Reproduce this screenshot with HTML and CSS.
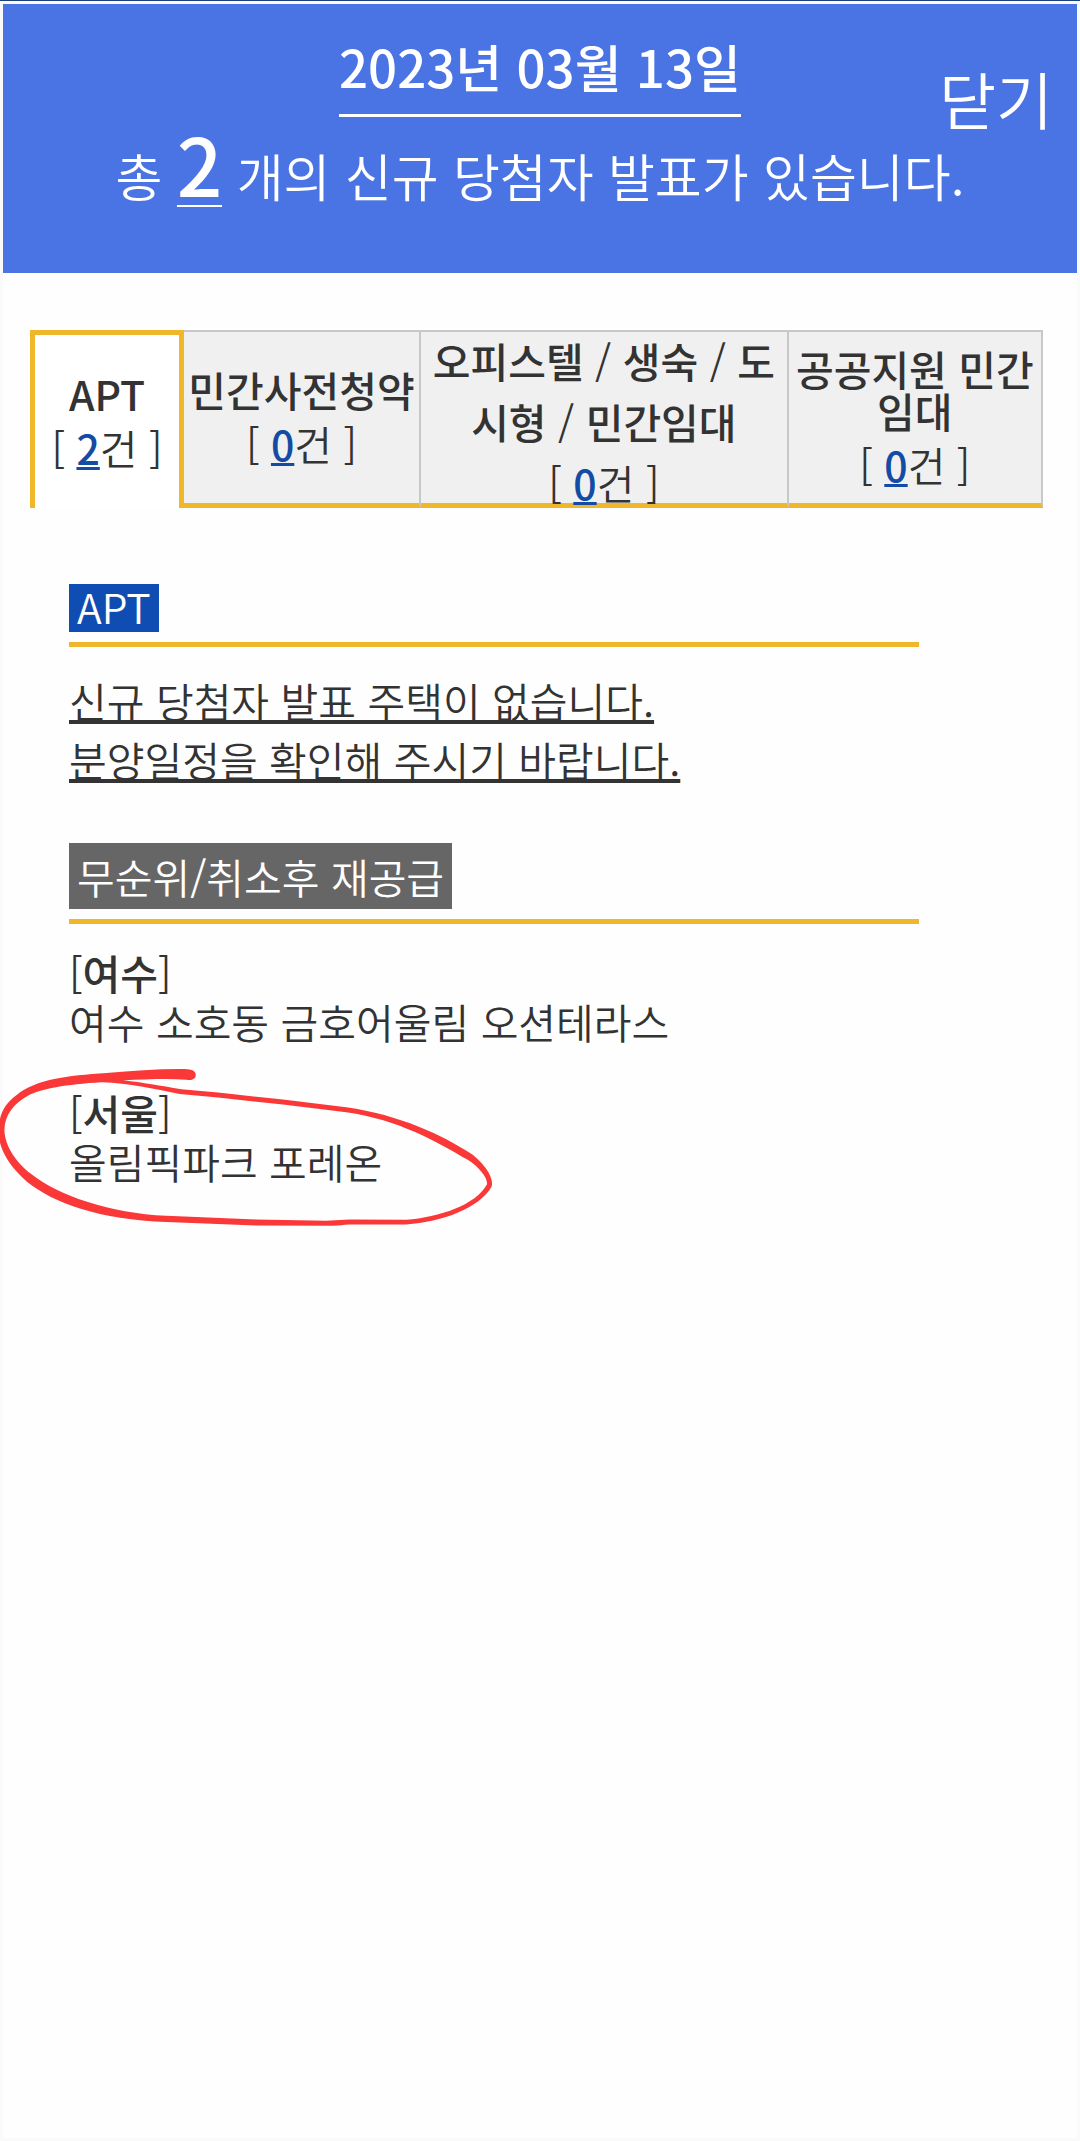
FILE: index.html
```html
<!DOCTYPE html>
<html lang="ko">
<head>
  <meta charset="UTF-8" />
  <meta name="viewport" content="width=device-width, initial-scale=1.0"/>
  <title>신규 당첨자 발표</title>
  <link rel="stylesheet" href="styles.css">
</head>
<body>
  <div class="popup">
    <header class="header">
      <h1 class="date">2023년 03월 13일</h1>
      <p class="summary">총 <strong>2</strong> 개의 신규 당첨자 발표가 있습니다.</p>
      <button type="button" class="close">닫기</button>
    </header>

    <div class="tabs" role="tablist">
      <button type="button" class="tab tab-apt active" role="tab" aria-selected="true">
        <span class="label">APT</span>
        <span class="count">[ <b>2</b>건 ]</span>
      </button>
      <button type="button" class="tab tab-pre" role="tab" aria-selected="false">
        <span class="label">민간사전청약</span>
        <span class="count">[ <b>0</b>건 ]</span>
      </button>
      <button type="button" class="tab tab-office" role="tab" aria-selected="false">
        <span class="label">오피스텔 <i>/</i> 생숙 <i>/</i> 도시형 <i>/</i> 민간임대</span>
        <span class="count">[ <b>0</b>건 ]</span>
      </button>
      <button type="button" class="tab tab-public" role="tab" aria-selected="false">
        <span class="label">공공지원 민간임대</span>
        <span class="count">[ <b>0</b>건 ]</span>
      </button>
    </div>

    <main class="content">
      <section class="group">
        <h2 class="title"><span class="badge blue">APT</span></h2>
        <p class="empty">신규 당첨자 발표 주택이 없습니다.<br>분양일정을 확인해 주시기 바랍니다.</p>
      </section>

      <section class="group">
        <h2 class="title"><span class="badge gray">무순위/취소후 재공급</span></h2>
        <ul class="list">
          <li>
            [<b>여수</b>]<br>여수 소호동 금호어울림 오션테라스
          </li>
          <li>
            [<b>서울</b>]<br>올림픽파크 포레온
            <svg class="marker" viewBox="0 0 1568 600" aria-hidden="true">
              <path fill="#fb3838" fill-rule="evenodd" d="M588 75 C588 63 578 58 555 57 C480 56 400 63 320 69 C200 77 110 87 50 135 C12 162 -2 195 -5 240 C-5 300 30 350 80 395 C160 460 300 510 500 517 L770 527 L1000 528 C1020 527 1030 525 1050 524 L1220 524 C1330 516 1440 475 1477 410 C1485 380 1450 340 1420 315 C1330 255 1200 195 1040 172 L850 149 L655 128 L545 118 C480 107 430 98 370 91 C440 88 500 85 560 89 C575 92 588 88 588 75Z
              M305 97 C200 103 120 117 85 137 C40 162 15 195 13 240 C15 290 50 340 95 373 C170 435 330 490 500 498 L770 509 L980 513 L1050 509 L1220 510 C1320 502 1430 465 1463 403 C1465 385 1440 352 1405 330 C1310 275 1200 210 1040 187 L850 164 L655 143 L540 132 C460 117 390 99 305 97Z"/>
            </svg>
          </li>
        </ul>
      </section>
    </main>
  </div>
</body>
</html>
```
FILE: styles.css
```css
* {
  box-sizing: border-box;
}

body {
  margin: 0;
  min-height: 100vh;
  display: flex;
  flex-direction: column;
  padding: 3px;
  border-top: 1px solid #1e4079;
  background: #fafafa;
  font-family: 'Noto Sans CJK KR', 'Noto Sans', sans-serif;
  font-size: 41px;
  font-weight: 350;
  color: #333;
  overflow-x: hidden;
}

h1, h2, p, ul {
  margin: 0;
  padding: 0;
}

b {
  font-weight: 500;
}

button {
  padding: 0;
  border: none;
  background: none;
  font: inherit;
  color: inherit;
  cursor: pointer;
}

.popup {
  flex: 1;
  background: #fefefe;
}

.header {
  position: relative;
  height: 269px;
  padding-top: 23px;
  background: #4a73e4;
  color: #fff;
  text-align: center;
}

.date {
  display: inline-block;
  border-bottom: 3px solid #fff;
  padding-bottom: 9px;
  font-size: 51px;
  font-weight: 500;
  line-height: 78px;
}

.summary {
  padding-top: 5px;
  font-size: 51px;
  line-height: 88px;
}

.summary strong {
  display: inline-block;
  border-bottom: 2px solid #fff;
  padding-bottom: 3px;
  font-size: 80px;
  font-weight: 500;
  line-height: 80px;
}

.close {
  position: absolute;
  top: 48px;
  right: 24px;
  font-size: 62px;
  line-height: 92px;
}

.tabs {
  display: flex;
  height: 178px;
  margin: 57px 34px 0 27px;
}

.tab {
  display: flex;
  flex-direction: column;
  align-items: center;
  justify-content: center;
  border: 2px solid #c8c8c8;
  border-left-width: 0;
  border-bottom: 5px solid #f0b72a;
  padding-top: 8px;
  background: #f0f0f0;
}

.tab-apt { width: 15.2%; }
.tab-pre { width: 23.4%; }
.tab-office { width: 36.3%; }
.tab-public { width: 25.1%; }

.tab.active {
  border: 5px solid #f0b72a;
  border-bottom: none;
  background: #fff;
}

.label {
  font-weight: 500;
  line-height: 42px;
}

.label i {
  font-style: normal;
  font-weight: 350;
}

.tab-office .label {
  line-height: 61px;
  word-break: break-all;
}

.count {
  line-height: 66px;
}

.tab-office .count {
  line-height: 61px;
}

.count b {
  color: #134ba5;
  text-decoration: underline;
  text-decoration-thickness: 3px;
}

.content {
  width: 850px;
  max-width: 100%;
  margin: 76px 0 0 66px;
}

.group {
  margin-bottom: 54px;
}

.title {
  display: flex;
  border-bottom: 5px solid #f0b72a;
  padding-bottom: 10px;
  font-size: 41px;
  font-weight: 350;
}

.badge {
  padding: 0 8px;
  color: #fff;
}

.badge.blue {
  padding-bottom: 3px;
  background: #0f4db3;
  line-height: 45px;
}

.badge.gray {
  background: #666;
  line-height: 66px;
}

.empty {
  margin-top: 24px;
  line-height: 59px;
  text-decoration: underline;
  text-decoration-thickness: 4px;
  text-decoration-skip-ink: none;
}

.list {
  margin-top: 24px;
  list-style: none;
}

.list li {
  position: relative;
  margin-bottom: 42px;
  line-height: 49px;
}

/* hand-drawn circle around the item */
.marker {
  position: absolute;
  top: -38px;
  left: -69px;
  width: 522px;
}
```
